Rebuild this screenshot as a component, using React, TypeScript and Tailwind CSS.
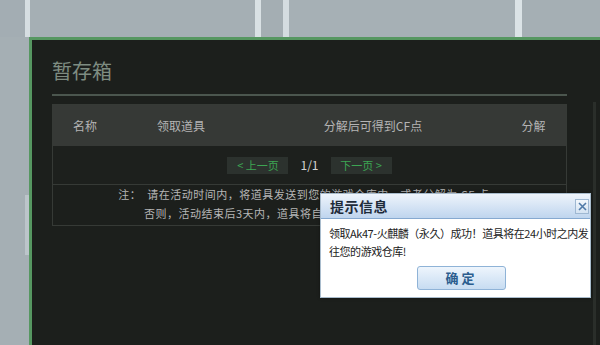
import React from "react";

const cjk = { fontFamily: '"Noto Sans CJK SC", "Noto Sans", sans-serif' };

function Stripes() {
  return (
    <div className="h-[37px] flex shrink-0">
      <div className="w-[25px] bg-[#a3adb3]" />
      <div className="w-[5px] bg-[#d6dee2]" />
      <div className="w-[225px] bg-[#a5afb4]" />
      <div className="w-[6px] bg-[#d9e1e4]" />
      <div className="w-[22px] bg-[#a4aeb3]" />
      <div className="w-[6px] bg-[#d4dce0]" />
      <div className="w-[226px] bg-[#a6b0b5]" />
      <div className="w-[7px] bg-[#dbe3e6]" />
      <div className="flex-1 bg-[#a5afb4]" />
    </div>
  );
}

function PageButton({ children }: { children: React.ReactNode }) {
  return (
    <div className="h-[17px] w-[61px] bg-[#2c322e] flex items-center justify-center text-[11px] text-[#3da553] leading-none">
      {children}
    </div>
  );
}

function Dialog() {
  return (
    <div
      className="absolute left-[320px] top-[193px] w-[271px] h-[105px] bg-white border border-[#a9bccd] flex flex-col shadow-[0_0_3px_rgba(0,0,0,0.4)]"
      style={cjk}
    >
      <div className="h-[25px] shrink-0 bg-gradient-to-b from-[#eef4fb] to-[#bfd5ee] border-b border-[#86a9d0] flex items-center justify-between pl-[9px] pr-[1px]">
        <span className="text-[14px] font-bold text-[#1e2b3a] tracking-[0.5px]">提示信息</span>
        <div className="w-[14px] h-[15px] bg-gradient-to-b from-[#f2f7fc] to-[#d4e3f2] border border-[#9fb8d2] flex items-center justify-center">
          <svg width="9" height="9" viewBox="0 0 9 9">
            <path d="M1 1 L8 8 M8 1 L1 8" stroke="#4f79a8" strokeWidth="1.6" />
          </svg>
        </div>
      </div>
      <div className="flex-1 flex flex-col pt-[5px] px-[8px]">
        <div className="text-[11px] leading-[18px] text-[#222] tracking-[-0.45px] whitespace-nowrap">
          <p>领取Ak47-火麒麟（永久）成功！道具将在24小时之内发</p>
          <p>往您的游戏仓库!</p>
        </div>
        <div className="flex mt-[6px] pl-[88px]">
          <div className="w-[89px] h-[24px] rounded-[3px] border border-[#8fb3d7] bg-gradient-to-b from-[#eef5fc] to-[#c7dcf1] flex items-center justify-center text-[13px] font-bold text-[#2b5d8e] tracking-[3px]">
            确定
          </div>
        </div>
      </div>
    </div>
  );
}

export default function App() {
  return (
    <div className="w-[600px] h-[345px] bg-[#a5afb4] relative overflow-hidden flex flex-col" style={cjk}>
      <Stripes />
      <div className="flex flex-1">
        <div className="w-[29px] shrink-0 flex flex-col">
          <div className="h-[158px]" />
          <div className="h-[60px] w-[4px] ml-[25px] bg-[#bcc5ca]" />
        </div>
        <div className="flex-1 bg-[#1c1f1c] border-l-[3px] border-t-[3px] border-[#569761] flex">
          <div className="pl-[20px] pt-[17px] flex flex-col w-[535px]">
            <h1 className="text-[20px] leading-[28px] text-[#7e8c81] font-normal">暂存箱</h1>
            <div className="mt-[9px] h-[2px] bg-[#4b564e]" />
            <div className="mt-[8px] border border-[#363a36]">
              <div className="h-[41px] bg-[#363936] grid grid-cols-[64px_128px_256px_1fr] items-center text-center text-[12px] text-[#b4b4b4]">
                <span>名称</span>
                <span>领取道具</span>
                <span>分解后可得到CF点</span>
                <span>分解</span>
              </div>
              <div className="h-[39px] bg-[#1d201d] border-b border-[#363a36] flex items-center justify-center">
                <PageButton>&lt; 上一页</PageButton>
                <span className="mx-[12px] text-[12px] text-[#d2d2d2]">1/1</span>
                <PageButton>下一页 &gt;</PageButton>
              </div>
              <div className="pb-[2px] text-center text-[11px] tracking-[0.5px] leading-[19px] text-[#b6b6b6] whitespace-nowrap">
                <p>注：&nbsp;&nbsp;请在活动时间内，将道具发送到您的游戏仓库中，或者分解为 CF 点，</p>
                <p>否则，活动结束后3天内，道具将自动分解为CF点存入您的账户。</p>
              </div>
            </div>
          </div>
          <div className="flex-1" />
          <div className="w-[3px] mt-[62px] bg-[#2a2e2a]" />
          <div className="w-[4px]" />
        </div>
      </div>
      <Dialog />
    </div>
  );
}
